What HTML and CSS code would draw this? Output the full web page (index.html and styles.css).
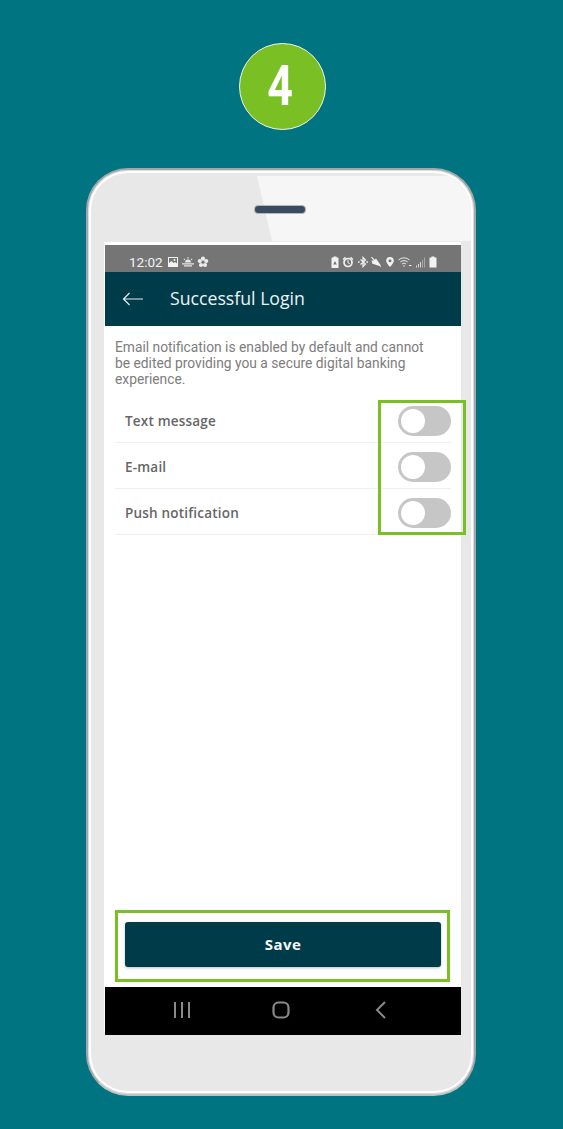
FILE: index.html
```html
<!DOCTYPE html>
<html lang="en">
<head>
<meta charset="utf-8">
<title>Successful Login</title>
<link rel="stylesheet" href="styles.css">
</head>
<body>
<div class="step"><span class="step-num">4</span></div>
<div class="phone">
  <div class="phone-body">
    <div class="sheen"></div>
    <div class="speaker"></div>
    <div class="screen">
      <div class="status">
        <div class="status-left">
          <span class="time">12:02</span>
          <svg class="ic" viewBox="0 0 12 12"><path fill="#f2f2f2" fill-rule="evenodd" d="M1 1h10v10H1zM2 2v5l2.500-2 2 2 1.500-1 2 1.500V2z"/><circle cx="7.500" cy="4" r="1" fill="#f2f2f2"/></svg>
          <svg class="ic" viewBox="0 0 12 12"><path fill="#e8e8e8" d="M3 6.500a3 3 0 0 1 6 0zM0 7.300h12v1.200H0zM2 9.300h8v1.200H2zM5.500 1h1v1.800h-1zM1.500 3l.8-.6 1 1.300-.8.6zM10.500 3l-.8-.6-1 1.300.8.600z"/></svg>
          <svg class="ic" viewBox="0 0 12 12"><g fill="#ececec"><circle cx="6" cy="2.700" r="2.100"/><circle cx="9.200" cy="5" r="2.100"/><circle cx="8" cy="9" r="2.100"/><circle cx="4" cy="9" r="2.100"/><circle cx="2.800" cy="5" r="2.100"/></g><circle cx="6" cy="6.200" r="1" fill="#757575"/></svg>
        </div>
        <div class="status-right">
          <svg class="ic ic-n" viewBox="2 0 8 12"><path fill="#f2f2f2" fill-rule="evenodd" d="M3 1.500h1.500V.5h3v1H9a.5.500 0 0 1 .5.500v9.500a.5.500 0 0 1-.5.500H3a.5.500 0 0 1-.5-.500V2a.5.500 0 0 1 .5-.500zM4.200 8.500h3.600L6 5z"/></svg>
          <svg class="ic" viewBox="0 0 12 12"><circle cx="6" cy="6.500" r="4" fill="none" stroke="#f2f2f2" stroke-width="1.700"/><path fill="none" stroke="#f2f2f2" d="M6 4v2.800l1.800 1"/><path fill="#f2f2f2" d="M.6 3 3 .8l.9.9-2.400 2.300zM11.400 3 9 .8l-.9.9 2.400 2.300z"/></svg>
          <svg class="ic ic-m" viewBox="1 0 10 12"><path fill="none" stroke="#ececec" stroke-width="1.300" d="M3.500 3.500 8.500 8 6 10.500V1.500L8.500 4 3.500 8.500"/><path fill="#f2f2f2" d="M1 5.200h1.600v1.600H1zM9.400 5.200H11v1.600H9.400z"/></svg>
          <svg class="ic ic-m" viewBox="1 0 10 12"><path fill="#f2f2f2" d="M1.500 4.500H4L6 2.500 10.500 9 9.500 10 3.300 8H2.500zM1 1.500l.8-.8 9.500 9.500-.8.800z"/></svg>
          <svg class="ic ic-m" viewBox="1 0 10 12"><path fill="#f2f2f2" fill-rule="evenodd" d="M6 1a3.800 3.800 0 0 1 3.800 3.800C9.800 7.300 6 11 6 11S2.200 7.300 2.200 4.800A3.800 3.800 0 0 1 6 1zm0 2.300a1.500 1.500 0 1 0 0 3 1.500 1.500 0 0 0 0-3z"/></svg>
          <svg class="ic ic-wifi" viewBox="0 0 14 12"><path fill="none" stroke="#e6e6e6" d="M.5 4a8 8 0 0 1 11 0M2.300 6a5.500 5.500 0 0 1 7.400 0M4 8a3 3 0 0 1 4 0"/><path fill="#f2f2f2" d="M5 9.500h2L6 11zM11 9h2.500v1H11z"/></svg>
          <svg class="ic ic-signal" viewBox="0 0 10 12"><path fill="#d8d8d8" d="M0 9.500h1v2H0zM2 8h1v3.500H2zM4 6h1v5.500H4z"/><path fill="#a8a8a8" d="M6 4h1v7.500H6zM8 1.500h1v10H8z"/></svg>
          <svg class="ic ic-batt" viewBox="0 0 8 12"><path fill="#f2f2f2" d="M2.500.5h3v1H7a.5.500 0 0 1 .5.500v9.500H.5V2A.5.500 0 0 1 1 1.500h1.500z"/></svg>
        </div>
      </div>
      <header class="appbar">
        <svg class="back" viewBox="0 0 22 14"><path fill="none" stroke="#e6ecee" stroke-width="1.200" d="M21 7H1.500M7.500 1 1.500 7l6 6"/></svg>
        <h1 class="title">Successful Login</h1>
      </header>
      <main class="content">
        <p class="intro">Email notification is enabled by default and cannot be edited providing you a secure digital banking experience.</p>
        <div class="list">
          <div class="row"><span class="label">Text message</span><span class="toggle"></span></div>
          <div class="row"><span class="label">E-mail</span><span class="toggle"></span></div>
          <div class="row"><span class="label">Push notification</span><span class="toggle"></span></div>
          <div class="highlight-toggles"></div>
        </div>
        <div class="save-wrap">
          <button class="save" type="button">Save</button>
        </div>
      </main>
      <nav class="navbar">
        <svg class="nav-ic" viewBox="0 0 18 18"><path fill="none" stroke="#8a8a8a" stroke-width="2" d="M2 1v16M9 1v16M16 1v16"/></svg>
        <svg class="nav-ic" viewBox="0 0 18 18"><rect x="1.500" y="1.500" width="15" height="15" rx="5" fill="none" stroke="#8a8a8a" stroke-width="2.200"/></svg>
        <svg class="nav-ic" viewBox="0 0 18 18"><path fill="none" stroke="#8a8a8a" stroke-width="2" d="M14 1 6 9l8 8"/></svg>
      </nav>
    </div>
  </div>
</div>
</body>
</html>
```

FILE: styles.css
```css
* {
  box-sizing: border-box;
}

html,
body {
  margin: 0;
  padding: 0;
}

body {
  height: 1129px;
  overflow: hidden;
  background: #007480;
  padding-top: 43px;
  font-family: "Roboto", "Liberation Sans", sans-serif;
}

.step {
  width: 87px;
  height: 87px;
  margin-left: 239px;
  padding-right: 5px;
  border: 1px solid #f1f6e8;
  border-radius: 50%;
  background: #7ac024;
  color: #fff;
  font-weight: 700;
  font-size: 56px;
  line-height: 85px;
  text-align: center;
}

.step-num {
  display: inline-block;
  transform: scaleX(0.8);
}

.phone {
  width: 390px;
  height: 928px;
  margin: 38px 0 0 86px;
  padding: 3px;
  border: 2px solid #a4a7a9;
  border-bottom-color: #bfc1c2;
  border-radius: 42px;
  background: #fff;
  box-shadow: inset 0 0 0 1px #dcdcdc;
}

.phone-body {
  position: relative;
  height: 100%;
  padding: 72px 10px 0 14px;
  border-radius: 37px;
  background: #e8e8e8;
  overflow: hidden;
}

.sheen {
  position: absolute;
  top: 3px;
  left: 166px;
  right: 0;
  height: 65px;
  background: #f6f6f6;
  clip-path: polygon(0 0, 100% 0, 100% 100%, 15px 100%);
}

.speaker {
  position: absolute;
  top: 32px;
  left: 163px;
  width: 52px;
  height: 9px;
  border-radius: 4px;
  border: 1.500px solid #b4b8bd;
  background: #3b4a5e;
}

.screen {
  position: relative;
  display: flex;
  flex-direction: column;
  width: 356px;
  height: 790px;
  box-shadow: 0 -3px 0 #fff, -1px -3px 0 #fff;
  background: #fff;
}

.status {
  display: flex;
  justify-content: space-between;
  align-items: center;
  height: 27px;
  padding: 6px 24px 0 24px;
  background: #757575;
}

.status-left,
.status-right {
  display: flex;
  align-items: center;
}

.status-left {
  gap: 3px;
}

.status-right {
  gap: 3.500px;
}

.time {
  margin-right: 1px;
  color: #f2f2f2;
  font-size: 13.500px;
  line-height: 16px;
}

.ic {
  display: block;
  width: 12px;
  height: 12px;
}

.ic-n {
  width: 8px;
}

.ic-m {
  width: 10px;
}

.ic-wifi {
  width: 14px;
}

.ic-signal {
  width: 10px;
}

.ic-batt {
  width: 8px;
}

.appbar {
  display: flex;
  align-items: center;
  gap: 26px;
  height: 54px;
  padding: 0 0 3px 17px;
  background: #003b4a;
}

.back {
  display: block;
  width: 22px;
  height: 14px;
  margin-top: 2px;
}

.title {
  margin: 0;
  color: #eef3f4;
  font-family: "Open Sans", sans-serif;
  font-weight: 400;
  font-size: 17.700px;
  line-height: 24px;
}

.content {
  display: flex;
  flex-direction: column;
  flex: 1;
  padding: 13px 10px 0;
}

.intro {
  margin: 0;
  padding-right: 14px;
  color: #7d7d7d;
  font-size: 13.800px;
  line-height: 16px;
}

.list {
  position: relative;
  margin-top: 10px;
}

.row {
  display: flex;
  justify-content: space-between;
  align-items: center;
  height: 46px;
  padding: 2px 0 0 10px;
  border-bottom: 1px solid #efefef;
}

.label {
  color: #666;
  font-family: "Open Sans", sans-serif;
  font-weight: 600;
  font-size: 13.500px;
  letter-spacing: 0.2px;
}

.toggle {
  position: relative;
  display: block;
  width: 53px;
  height: 30px;
  border-radius: 15px;
  background: #c6c6c6;
}

.toggle::before {
  content: "";
  position: absolute;
  top: 3px;
  left: 3px;
  width: 24px;
  height: 24px;
  border-radius: 50%;
  background: #fff;
}

.highlight-toggles {
  position: absolute;
  top: 3px;
  left: 263px;
  width: 88px;
  height: 135px;
  border: 3px solid #7ac024;
}

.save-wrap {
  width: 335px;
  height: 72px;
  margin-top: auto;
  margin-bottom: 5px;
  padding: 9px 6px 0 7px;
  border: 3px solid #7ac024;
}

.save {
  display: block;
  width: 316px;
  height: 45px;
  padding-bottom: 3px;
  border: 0;
  border-radius: 3px;
  background: #003b4a;
  box-shadow: 0 1px 3px rgba(0, 0, 0, 0.25);
  color: #f4f7f8;
  font-family: "Open Sans", sans-serif;
  font-weight: 700;
  font-size: 15px;
  letter-spacing: 0.4px;
}

.navbar {
  display: flex;
  justify-content: space-around;
  align-items: center;
  height: 48px;
  padding: 0 31px 2px 27px;
  background: #000;
}

.nav-ic {
  display: block;
  width: 18px;
  height: 18px;
}
```
